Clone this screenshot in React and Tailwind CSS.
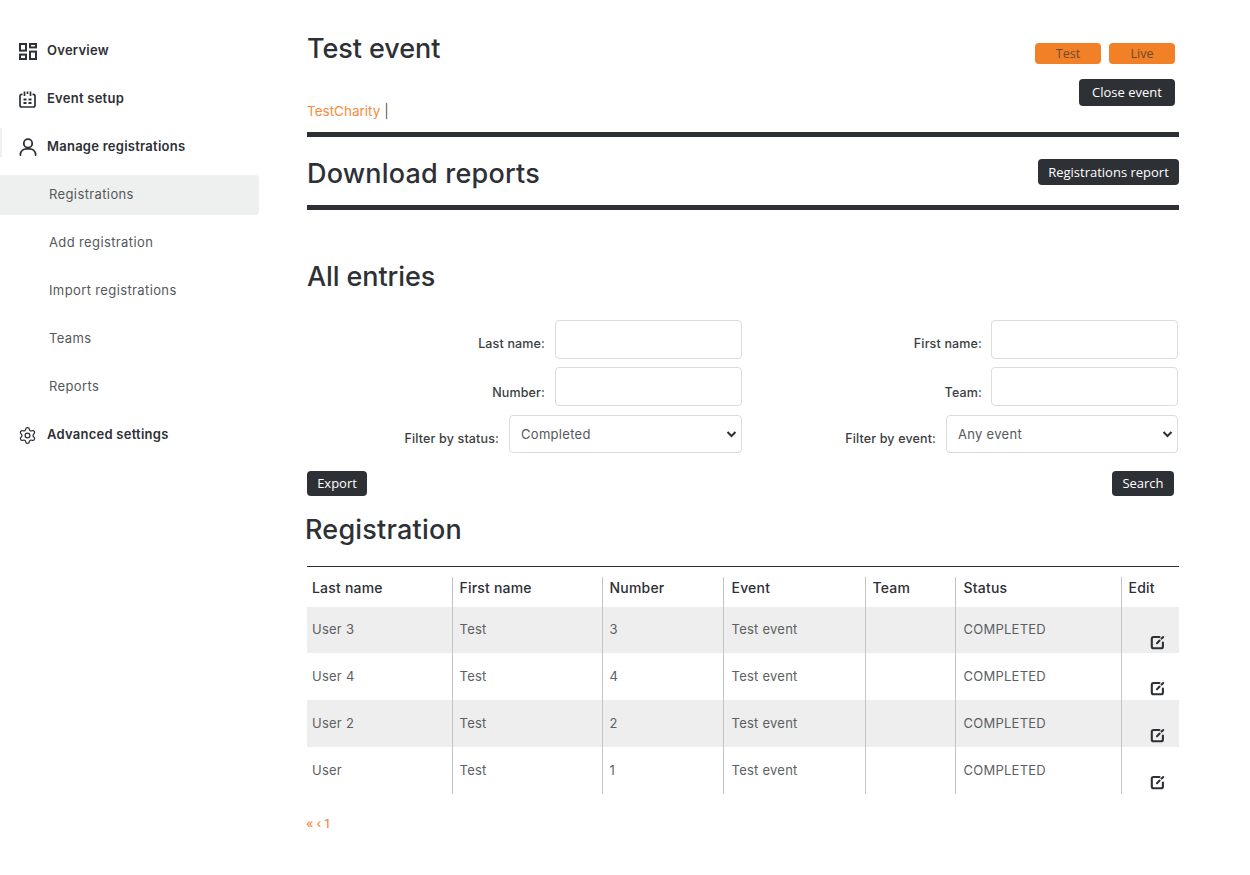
import React from "react";
import { Settings } from "lucide-react";

const dark = "#2d3035";

function OverviewIcon() {
  return (
    <svg width="18" height="17" viewBox="0 0 18 17" fill="none" stroke="#2d3035" strokeWidth="2">
      <rect x="1" y="1" width="6" height="6.6" />
      <rect x="11" y="1" width="6" height="3.4" />
      <rect x="1" y="11.6" width="6" height="4.4" />
      <rect x="11" y="8.6" width="6" height="7.4" />
    </svg>
  );
}

function CalendarIcon() {
  return (
    <svg width="17" height="17" viewBox="0 0 17 17" fill="none" stroke="#2d3035" strokeWidth="1.7">
      <path d="M3.5 3.4H2.8A1.8 1.8 0 0 0 1 5.2v9A1.8 1.8 0 0 0 2.8 16h11.4a1.8 1.8 0 0 0 1.8-1.8v-9a1.8 1.8 0 0 0-1.8-1.8h-.7" />
      <path d="M5.5 0.5v4.5M8.5 0.5v2.6M11.5 0.5v4.5" />
      <path d="M4.5 8.5h3M9.5 8.5h3M4.5 12h3M9.5 12h3" strokeWidth="2" />
    </svg>
  );
}

function UserIcon() {
  return (
    <svg width="18" height="18" viewBox="0 0 18 18" fill="none" stroke="#2d3035" strokeWidth="1.8" strokeLinecap="round">
      <circle cx="9" cy="5.4" r="4.2" />
      <path d="M1.4 17v-.8a6 6 0 0 1 6-5.4h3.2a6 6 0 0 1 6 5.4v.8" />
    </svg>
  );
}

function EditIcon() {
  return (
    <svg width="15" height="15" viewBox="0 0 15 15" fill="none" stroke="#2d3035" strokeWidth="2.1" strokeLinecap="round">
      <path d="M9.5 2H3.5A1.8 1.8 0 0 0 1.8 3.8v7.7a1.8 1.8 0 0 0 1.8 1.8h7.5a1.8 1.8 0 0 0 1.8-1.8V7.5" />
      <path d="M7 8.2 9.6 5.6M11.6 3.6 13.2 2" />
    </svg>
  );
}

function NavMain({ icon, label, marker }) {
  return (
    <div className="relative flex items-center h-10 mb-2 pl-[18px]">
      {marker && <div className="absolute left-0 top-[1px] w-[2px] h-[29px] bg-[#eef0ef]" />}
      <div className="w-[19px] flex justify-center">{icon}</div>
      <span className="ml-[10px] text-[13px] font-semibold tracking-[0.25px] text-[#2d3035]">{label}</span>
    </div>
  );
}

function NavSub({ label, active }) {
  return (
    <div className={`flex items-center h-10 mb-2 pl-[49px] rounded-r text-[13px] tracking-[0.38px] text-[#55585c] ${active ? "bg-[#eef0ef]" : ""}`}>
      {label}
    </div>
  );
}

function Btn({ children, className = "" }) {
  return (
    <button className={`bg-[#2d3035] text-white rounded text-[13px] leading-none font-['Open_Sans',sans-serif] ${className}`}>
      {children}
    </button>
  );
}

function Field({ label, labelClass }) {
  return (
    <div className="flex items-center justify-end h-[39px]">
      <label className={`text-[12.5px] font-medium tracking-[0.15px] text-[#3a3d41] ${labelClass}`}>{label}</label>
      <input className="w-[187px] h-[39px] border border-[#dcdcdc] rounded bg-white" />
    </div>
  );
}

function SelectField({ label, value, width }) {
  return (
    <div className="flex items-center justify-end h-[38px] mt-[1px]">
      <label className="text-[12.5px] font-medium tracking-[0.15px] text-[#3a3d41] mr-[10px] mt-[11px]">{label}</label>
      <div className={`relative h-[38px] border border-[#dcdcdc] rounded bg-white flex items-center pl-[11px] pt-[2px] text-[13px] tracking-[0.3px] text-[#55585c] ${width}`}>
        {value}
        <svg className="absolute right-[4px] top-[14px]" width="11" height="9" viewBox="0 0 11 9" fill="none" stroke="#2d3035" strokeWidth="2">
          <path d="M1.5 2 5.5 6 9.5 2" />
        </svg>
      </div>
    </div>
  );
}

const rows = [
  ["User 3", "3", "h-[46px] bg-[#eeeeee]"],
  ["User 4", "4", "h-[47px]"],
  ["User 2", "2", "h-[47px] bg-[#eeeeee]"],
  ["User", "1", "h-[47px]"],
];

const cols = [
  ["Last name", "w-[145px]", "pl-[5px]"],
  ["First name", "w-[150px]", "pl-[7px]"],
  ["Number", "w-[121px]", "pl-[7px]"],
  ["Event", "w-[142px]", "pl-[8px]"],
  ["Team", "w-[90px]", "pl-[7px]"],
  ["Status", "w-[166px]", "pl-[8px]"],
  ["Edit", "w-[58px]", "pl-[7px]"],
];

export default function App() {
  return (
    <div className="flex w-[1250px] h-[875px] bg-white font-['Inter',sans-serif] text-[#2d3035]">
      <aside className="w-[259px] shrink-0 pt-[31px]">
        <NavMain icon={<OverviewIcon />} label="Overview" />
        <NavMain icon={<CalendarIcon />} label="Event setup" />
        <NavMain icon={<UserIcon />} label="Manage registrations" marker />
        <NavSub label="Registrations" active />
        <NavSub label="Add registration" />
        <NavSub label="Import registrations" />
        <NavSub label="Teams" />
        <NavSub label="Reports" />
        <NavMain icon={<Settings size={19} strokeWidth={1.6} color={dark} />} label="Advanced settings" />
      </aside>

      <main className="ml-[48px] w-[872px]">
        <header className="relative h-[132px]">
          <h1 className="pt-[31px] text-[27px] leading-[36px] font-medium tracking-[-0.05px]">Test event</h1>
          <div className="mt-[35px] text-[13.5px] leading-[18px]">
            <span className="text-[#f58d3c]">TestCharity</span>
            <span className="text-[#55585c]"> |</span>
          </div>
          <div className="absolute right-[4px] top-[43px] flex flex-col items-end">
            <div className="flex gap-2">
              <span className="w-[66px] h-[21px] pt-[1px] rounded bg-[#f28027] text-[#6b4a30] text-[12.5px] flex items-center justify-center font-['Open_Sans',sans-serif]">Test</span>
              <span className="w-[66px] h-[21px] pt-[1px] rounded bg-[#f28027] text-[#6b4a30] text-[12.5px] flex items-center justify-center font-['Open_Sans',sans-serif]">Live</span>
            </div>
            <Btn className="mt-[15px] w-[96px] h-[27px]">Close event</Btn>
          </div>
        </header>
        <div className="h-[5px] bg-[#2d3035]" />

        <section className="h-[68px] flex items-center justify-between">
          <h2 className="text-[27px] font-medium leading-[36px] mt-[6px] tracking-[0.2px]">Download reports</h2>
          <Btn className="w-[141px] h-[26px] mt-[1px] pt-[2px]">Registrations report</Btn>
        </section>
        <div className="h-[5px] bg-[#2d3035]" />

        <h2 className="mt-[49px] text-[27px] font-medium leading-[36px] tracking-[-0.1px]">All entries</h2>

        <form className="mt-[25px] grid grid-cols-[435px_436px] gap-y-[8px]">
          <Field label="Last name:" labelClass="mr-[10px] mt-[9px]" />
          <Field label="First name:" labelClass="mr-[9px] mt-[9px]" />
          <Field label="Number:" labelClass="mr-[10px] mt-[13px]" />
          <Field label="Team:" labelClass="mr-[9px] mt-[13px]" />
          <SelectField label="Filter by status:" value="Completed" width="w-[233px]" />
          <SelectField label="Filter by event:" value="Any event" width="w-[232px]" />
        </form>

        <div className="mt-[18px] flex justify-between pr-[5px]">
          <Btn className="w-[60px] h-[25px]">Export</Btn>
          <Btn className="w-[62px] h-[25px]">Search</Btn>
        </div>

        <h2 className="mt-[16px] -ml-[2px] text-[27px] font-medium leading-[36px] tracking-[0.2px]">Registration</h2>

        <div className="mt-[18px] border-t border-[#2d3035] pt-[10px]">
          <table className="w-[872px] table-fixed border-collapse">
            <thead>
              <tr className="h-[30px]">
                {cols.map(([label, w, pad], i) => (
                  <th key={label} className={`${w} ${pad} ${i ? "border-l border-[#c4c4c4]" : ""} text-left text-[14px] leading-[20px] font-medium tracking-[0.2px] align-middle pb-[8px]`}>{label}</th>
                ))}
              </tr>
            </thead>
            <tbody>
              {rows.map(([name, num, rowClass]) => (
                <tr key={name} className={`text-[13px] tracking-[0.25px] text-[#5c5f63] ${rowClass}`}>
                  <td className="pl-[5px]">{name}</td>
                  <td className="pl-[7px] border-l border-[#c4c4c4]">Test</td>
                  <td className="pl-[7px] border-l border-[#c4c4c4]">{num}</td>
                  <td className="pl-[8px] border-l border-[#c4c4c4]">Test event</td>
                  <td className="border-l border-[#c4c4c4]" />
                  <td className="pl-[8px] border-l border-[#c4c4c4]">COMPLETED</td>
                  <td className="border-l border-[#c4c4c4] pl-[28px] pt-[24px]"><EditIcon /></td>
                </tr>
              ))}
            </tbody>
          </table>
        </div>

        <div className="mt-[22px] -ml-[1px] text-[12px] font-medium leading-[16px] text-[#f58d3c]">« ‹ 1</div>
      </main>
    </div>
  );
}
